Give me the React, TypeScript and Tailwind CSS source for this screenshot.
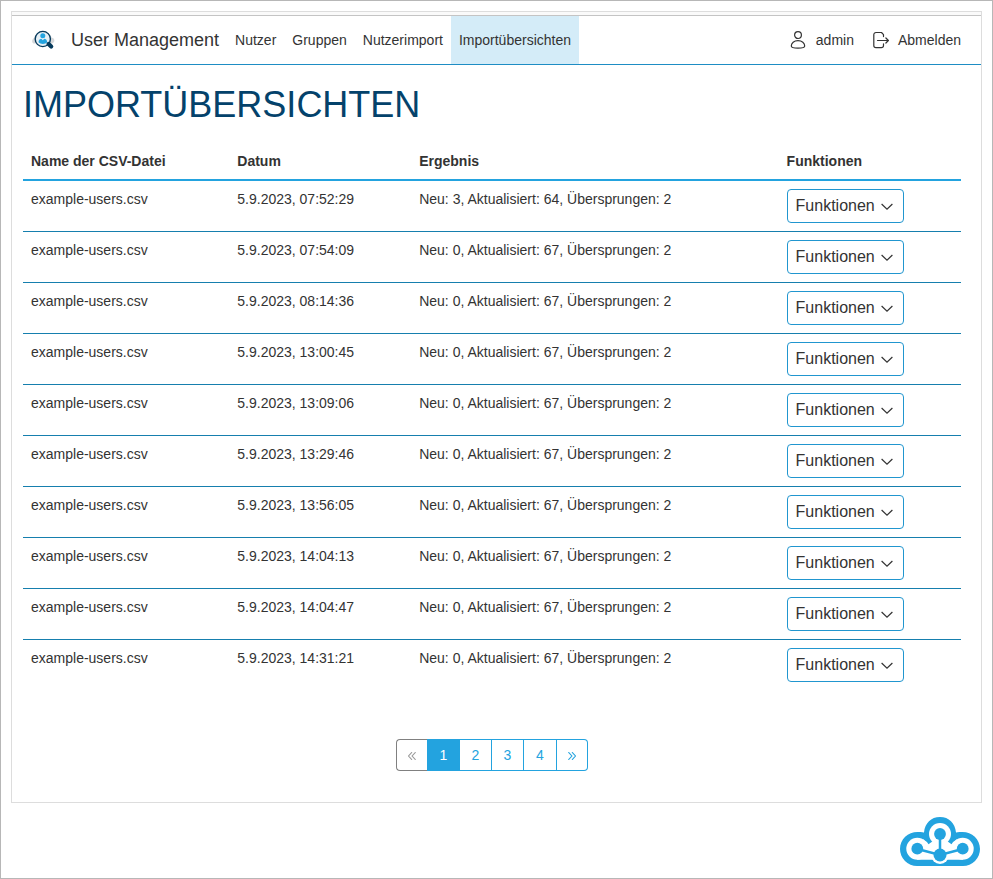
const rows = [
  ['5.9.2023, 07:52:29', 'Neu: 3, Aktualisiert: 64, Übersprungen: 2'],
  ['5.9.2023, 07:54:09', 'Neu: 0, Aktualisiert: 67, Übersprungen: 2'],
  ['5.9.2023, 08:14:36', 'Neu: 0, Aktualisiert: 67, Übersprungen: 2'],
  ['5.9.2023, 13:00:45', 'Neu: 0, Aktualisiert: 67, Übersprungen: 2'],
  ['5.9.2023, 13:09:06', 'Neu: 0, Aktualisiert: 67, Übersprungen: 2'],
  ['5.9.2023, 13:29:46', 'Neu: 0, Aktualisiert: 67, Übersprungen: 2'],
  ['5.9.2023, 13:56:05', 'Neu: 0, Aktualisiert: 67, Übersprungen: 2'],
  ['5.9.2023, 14:04:13', 'Neu: 0, Aktualisiert: 67, Übersprungen: 2'],
  ['5.9.2023, 14:04:47', 'Neu: 0, Aktualisiert: 67, Übersprungen: 2'],
  ['5.9.2023, 14:31:21', 'Neu: 0, Aktualisiert: 67, Übersprungen: 2'],
];

function UserSearchLogo() {
  return (
    <svg className="h-6 w-6" viewBox="0 0 24 24" fill="none">
      <path d="M1.500 15.500C-1 14 .5 10.500 2 10 3 6.500 5 4.500 8 4.500h6c3 .5 5 2.500 5.500 5 3.500.5 4 5 .5 6z" fill="#d6d8da" />
      <circle cx="10.800" cy="11" r="7.600" fill="#e6f0f6" stroke="#063a5c" strokeWidth="1.400" />
      <circle cx="10.800" cy="7.800" r="2.500" fill="#23a3df" />
      <path d="M6.500 14.300c0-2.500 1.700-3.500 2.800-3.500l1.500 1.500 1.500-1.500c1.200 0 2.900 1 2.900 3.500-2 2.200-6.500 2.200-8.700 0z" fill="#23a3df" />
      <path d="m16.600 16 2.600 2.600" stroke="#063a5c" strokeWidth="4.200" strokeLinecap="round" />
    </svg>
  );
}

function UserIcon() {
  return (
    <svg className="h-[18px] w-4" viewBox="0 0 16 18" fill="none" stroke="#333" strokeWidth="1.200">
      <circle cx="8" cy="4.100" r="3.400" />
      <path d="M1.300 15c0-3 2.700-5.400 6.700-5.400s6.700 2.400 6.700 5.400c0 2.800-13.400 2.800-13.400 0z" />
    </svg>
  );
}

function LogoutIcon() {
  return (
    <svg className="h-[18px] w-4" viewBox="0 0 16 18" fill="none" stroke="#333" strokeWidth="1.200" strokeLinecap="round" strokeLinejoin="round">
      <path d="M10.500 5.600V3.700L8.500 1.500H3A2.200 2.200 0 0 0 .8 3.700v10.800A2.200 2.200 0 0 0 3 16.700h5.300a2.200 2.200 0 0 0 2.200-2.200v-1.700M4.500 9.500h10.800M12.900 7l2.500 2.500-2.500 2.500" />
    </svg>
  );
}

function CloudLogo() {
  return (
    <svg className="h-[49px] w-20" viewBox="0 0 80 49">
      <path d="M17 49a17 17 0 0 1-17-17c0-10 8-17 17.500-17C22 15 24 15.500 24 15.500 25 6 31 0 40 0s15 6 16 15.500c0 0 2-.5 6.500-.5C72 15 80 22 80 32a17 17 0 0 1-17 17z" fill="#23a3df" />
      <g fill="white">
        <circle cx="40" cy="17" r="11" />
        <circle cx="17.300" cy="31.700" r="11" />
        <circle cx="62.700" cy="31.700" r="11" />
        <path d="M23 22.300q4 2.200 5.500 5l4.500-3.300h14l4.500 3.300q1.500-2.800 5.500-5L63 42.700H17z" />
        <circle cx="40" cy="38" r="9" />
      </g>
      <path d="m17.500 32 22.500 6 22.500-6M40 17v20" fill="none" stroke="#23a3df" strokeWidth="2.500" />
      <g fill="#23a3df">
        <circle cx="40" cy="17" r="5.900" />
        <circle cx="17.300" cy="31.700" r="5.900" />
        <circle cx="62.700" cy="31.700" r="5.900" />
        <circle cx="40" cy="38" r="6.500" />
      </g>
    </svg>
  );
}

function DoubleChevron({ className = '' }: { className?: string }) {
  return (
    <svg className={`mt-px h-2 w-2 ${className}`} viewBox="0 0 8 8" fill="none" stroke="currentColor" strokeWidth="1.100">
      <path d="M4 .2.500 4 4 7.800M7.600.2 4.100 4l3.500 3.800" />
    </svg>
  );
}

export default function App() {
  return (
    <div className="flex h-[879px] w-[993px] flex-col border border-[#b7b7b7] bg-white p-[10px] font-['Liberation_Sans',Arial,sans-serif] text-sm text-[#333]">
      <div className="flex h-[792px] w-[971px] shrink-0 flex-col border border-[#ddd]">
        <div className="h-[3px] shrink-0 bg-[#fafafa]" />
        <nav className="flex h-[50px] shrink-0 items-stretch border-t border-b border-t-[#c4c4c4] border-b-[#1e8dc4] pl-5">
          <a className="flex items-center">
            <UserSearchLogo />
            <span className="ml-[15px] text-lg">User Management</span>
          </a>
          <div className="ml-2 flex">
            <a className="flex items-center px-2">Nutzer</a>
            <a className="flex items-center px-2">Gruppen</a>
            <a className="flex items-center px-2">Nutzerimport</a>
            <a className="flex items-center bg-[#d4ecf8] px-2">Importübersichten</a>
          </div>
          <div className="ml-auto flex items-center pr-5">
            <UserIcon />
            <span className="ml-[10px]">admin</span>
            <span className="ml-[19px] flex"><LogoutIcon /></span>
            <span className="ml-[9px]">Abmelden</span>
          </div>
        </nav>
        <main className="flex flex-col pr-5 pl-[11px]">
          <h1 className="mt-[18px] text-[36px] leading-[44px] text-[#04426b]">IMPORTÜBERSICHTEN</h1>
          <table className="mt-4 w-[938px] table-fixed border-separate border-spacing-0 text-left">
            <colgroup>
              <col className="w-[206px]" />
              <col className="w-[182px]" />
              <col className="w-[368px]" />
              <col className="w-[182px]" />
            </colgroup>
            <thead>
              <tr className="h-[38px] *:border-b-2 *:border-[#23a3df] *:px-2 *:py-0 *:font-bold">
                <th>Name der CSV-Datei</th>
                <th><span className="ml-[0.3px]">Datum</span></th>
                <th><span className="ml-[0.2px]">Ergebnis</span></th>
                <th><span className="-ml-[0.4px]">Funktionen</span></th>
              </tr>
            </thead>
            <tbody>
              {rows.map(([date, result]) => (
                <tr key={date} className="h-[51px] align-top *:border-b *:border-[#167fae] *:px-2 *:pt-2 last:*:border-b-0">
                  <td>example-users.csv</td>
                  <td><span className="ml-[0.3px]">{date}</span></td>
                  <td><span className="ml-[0.2px]">{result}</span></td>
                  <td>
                    <button className="flex h-[34px] w-[117px] items-center rounded border border-[#2196cf] pl-[7.6px] text-base">
                      Funktionen
                      <svg className="mt-[2px] ml-[6px] h-3 w-3" viewBox="0 0 12 12" fill="none" stroke="#333" strokeWidth="1.200">
                        <path d="m.6 3 5.400 5.200L11.400 3" />
                      </svg>
                    </button>
                  </td>
                </tr>
              ))}
            </tbody>
          </table>
        </main>
        <div className="mt-12 ml-96 flex h-8 text-[#23a3df] *:flex *:items-center *:justify-center *:border-y">
          <a className="w-[31px] rounded-l border-l border-[#808080] text-[#999]"><DoubleChevron /></a>
          <a className="w-[33px] border-[#23a3df] bg-[#23a3df] text-white">1</a>
          <a className="w-8 border-r border-[#23a3df]">2</a>
          <a className="w-8 border-r border-[#23a3df]">3</a>
          <a className="w-[33px] border-r border-[#23a3df]">4</a>
          <a className="w-[31px] rounded-r border-r border-[#23a3df]"><DoubleChevron className="rotate-180" /></a>
        </div>
      </div>
      <footer className="mt-[14px] flex justify-end pr-[2px]">
        <CloudLogo />
      </footer>
    </div>
  );
}
